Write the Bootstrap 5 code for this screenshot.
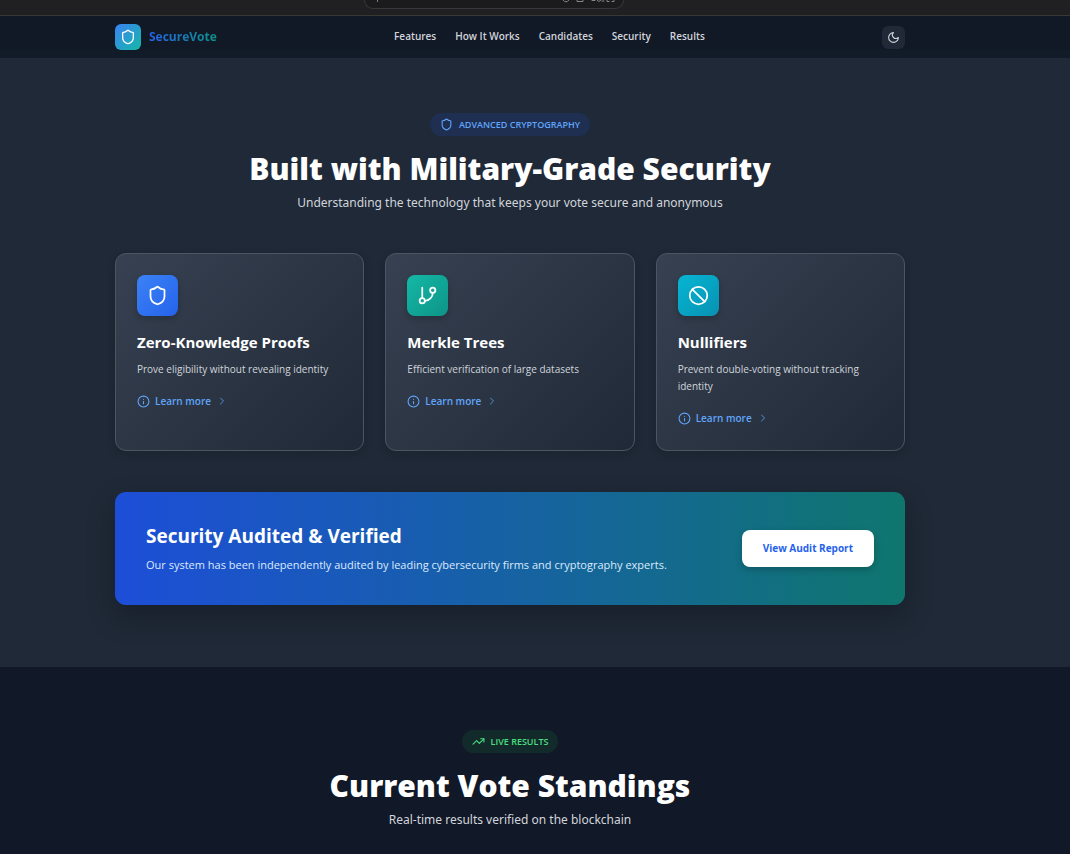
<!DOCTYPE html>
<html lang="en">
<head>
<meta charset="utf-8">
<meta name="viewport" content="width=device-width, initial-scale=1">
<title>SecureVote</title>
<link href="https://cdn.jsdelivr.net/npm/bootstrap@5.3.0/dist/css/bootstrap.min.css" rel="stylesheet">
<style>
body{background:#111827;color:#fff;font-family:"Segoe UI","Open Sans","Noto Sans",sans-serif;overflow-x:hidden}
svg{fill:none;stroke:currentColor;stroke-width:2;stroke-linecap:round;stroke-linejoin:round;flex:none}
.page-inner{padding-left:115px;padding-right:165px}
.browser-strip{height:16px;background:#202022;border-bottom:1px solid #3a3735;overflow:hidden}
.address-bar{width:260px;height:9px;margin-left:364px;padding-left:11px;padding-right:8px;background:#1b1b1d;border:1px solid #38383a;border-top:0;border-radius:0 0 12px 12px;color:#858587}
.address-bar svg{stroke-width:1}
.site-nav{padding:8px 0;background:linear-gradient(#111826 34px,#121c28 34px)}
.brand-tile{width:26px;height:26px;border-radius:6px;color:#fff;background:linear-gradient(135deg,#3b82f6,#14b8a6)}
.brand-name{font-size:12px;line-height:20px;font-weight:700;background:linear-gradient(90deg,#2563eb,#0d9488);-webkit-background-clip:text;background-clip:text;color:transparent}
.menu-links{gap:19px;padding-bottom:2px}
.menu-links .nav-link{padding:0;font-size:10px;line-height:16px;font-weight:600;color:#d1d5db}
.theme-btn{width:23px;height:23px;border-radius:6px;background:#1f2937;color:#d1d5db}
.theme-btn:hover{background:#374151;color:#fff}
.band-security{background:#1f2937;padding-top:55px;padding-bottom:62px}
.band-results{background:#111827;padding-top:63px;padding-bottom:24px}
.pill{height:23px;padding:0 10px;gap:6px;font-size:9px;font-weight:600;border-radius:12px}
.pill-blue{background:#1e2f52;color:#60a5fa}
.pill-green{background:#132a2b;color:#4ade80}
.band-title{font-size:30px;line-height:36px;font-weight:800;margin:14px 0 6px}
.band-sub{font-family:"Segoe UI","Noto Sans",sans-serif;font-size:12px;line-height:20px;color:#d1d5db;margin:0}
.tech-grid{gap:21px;margin-top:40px}
.tech-grid>article{flex:1 1 0}
.tech-card{min-height:198px;padding:21px;border:1px solid #4b5563;border-radius:11px;background:linear-gradient(135deg,#374151,#1f2937);box-shadow:0 3px 8px rgba(0,0,0,.15)}
.tech-tile{width:41px;height:41px;border-radius:8px;box-shadow:0 3px 6px rgba(0,0,0,.2)}
.tile-blue{background:linear-gradient(135deg,#3b82f6,#2563eb)}
.tile-teal{background:linear-gradient(135deg,#14b8a6,#0d9488)}
.tile-cyan{background:linear-gradient(135deg,#06b6d4,#0891b2)}
.tech-card h3{font-size:15px;line-height:20px;font-weight:700;margin:16px 0 9px}
.tech-card p{font-size:10px;line-height:17px;color:#d1d5db;margin:0 0 15px}
.more-link{gap:5px;font-size:10px;line-height:16px;font-weight:600;color:#60a5fa;text-decoration:none}
.more-link .chev{opacity:.8}
.audit{margin-top:41px;padding:31px;border-radius:11px;background:linear-gradient(90deg,#1d4ed8,#0f766e);box-shadow:0 12px 28px rgba(0,0,0,.25)}
.audit h3{font-size:19px;line-height:26px;font-weight:700;margin:0 0 6px}
.audit p{font-size:11px;line-height:19px;color:#dbeafe;margin:0}
.audit-btn{height:37px;padding:0 21px;border-radius:8px;background:#fff;color:#2563eb;font-size:10px;font-weight:700;box-shadow:0 3px 7px rgba(0,0,0,.2);white-space:nowrap}
.audit-btn:hover{background:#eff6ff;color:#1d4ed8}
</style>
</head>
<body>
<div class="browser-strip"><div class="address-bar d-flex justify-content-between align-items-start">
 <svg width="3" height="3" viewBox="0 0 3 3"><path d="M1.500 0v1.500"/></svg>
 <svg width="54" height="3" viewBox="0 0 54 3"><path d="M2 0q3 4 6 0M16 0v1.500h6V0M31 .5h3M36 0q2 3 4 0M41 1h2M46 0v1.500h2M51 1.500h2V0"/></svg>
</div></div>
<header class="navbar site-nav d-block">
 <div class="page-inner d-flex align-items-center justify-content-between">
  <a href="#" class="d-flex align-items-center gap-2 text-decoration-none">
   <span class="brand-tile d-flex align-items-center justify-content-center"><svg width="16" height="16" viewBox="0 0 24 24"><path d="M20 13c0 5-3.500 7.500-7.660 8.950a1 1 0 0 1-.67-.01C7.500 20.500 4 18 4 13V6a1 1 0 0 1 1-1c2 0 4.500-1.200 6.240-2.720a1.170 1.170 0 0 1 1.520 0C14.510 3.810 17 5 19 5a1 1 0 0 1 1 1z"/></svg></span>
   <span class="brand-name">SecureVote</span>
  </a>
  <nav class="nav menu-links flex-nowrap" aria-label="Main">
   <a class="nav-link" href="#">Features</a><a class="nav-link" href="#">How It Works</a><a class="nav-link" href="#">Candidates</a><a class="nav-link" href="#">Security</a><a class="nav-link" href="#">Results</a>
  </nav>
  <button type="button" class="btn theme-btn border-0 p-0 d-flex align-items-center justify-content-center" aria-label="Toggle dark mode"><svg width="13" height="13" viewBox="0 0 24 24"><path d="M12 3a6 6 0 0 0 9 9 9 9 0 1 1-9-9Z"/></svg></button>
 </div>
</header>
<main>
<section class="band-security"><div class="page-inner">
 <div class="text-center">
  <span class="pill pill-blue d-inline-flex align-items-center align-top"><svg width="13" height="13" viewBox="0 0 24 24"><path d="M20 13c0 5-3.500 7.500-7.660 8.950a1 1 0 0 1-.67-.01C7.500 20.500 4 18 4 13V6a1 1 0 0 1 1-1c2 0 4.500-1.200 6.240-2.720a1.170 1.170 0 0 1 1.520 0C14.510 3.810 17 5 19 5a1 1 0 0 1 1 1z"/></svg>ADVANCED CRYPTOGRAPHY</span>
  <h2 class="band-title">Built with Military-Grade Security</h2>
  <p class="band-sub">Understanding the technology that keeps your vote secure and anonymous</p>
 </div>
 <div class="tech-grid d-flex">
  <article class="tech-card">
   <div class="tech-tile tile-blue d-flex align-items-center justify-content-center"><svg width="21" height="21" viewBox="0 0 24 24"><path d="M20 13c0 5-3.500 7.500-7.660 8.950a1 1 0 0 1-.67-.01C7.500 20.500 4 18 4 13V6a1 1 0 0 1 1-1c2 0 4.500-1.200 6.240-2.720a1.170 1.170 0 0 1 1.520 0C14.510 3.810 17 5 19 5a1 1 0 0 1 1 1z"/></svg></div>
   <h3>Zero-Knowledge Proofs</h3><p>Prove eligibility without revealing identity</p>
   <a href="#" class="more-link d-flex align-items-center"><svg width="13" height="13" viewBox="0 0 24 24"><circle cx="12" cy="12" r="10"/><path d="M12 16v-4M12 8h.01"/></svg>Learn more<svg class="chev" width="12" height="12" viewBox="0 0 24 24"><path d="m9 18 6-6-6-6"/></svg></a>
  </article>
  <article class="tech-card">
   <div class="tech-tile tile-teal d-flex align-items-center justify-content-center"><svg width="21" height="21" viewBox="0 0 24 24"><path d="M6 3v12"/><circle cx="18" cy="6" r="3"/><circle cx="6" cy="18" r="3"/><path d="M18 9a9 9 0 0 1-9 9"/></svg></div>
   <h3>Merkle Trees</h3><p>Efficient verification of large datasets</p>
   <a href="#" class="more-link d-flex align-items-center"><svg width="13" height="13" viewBox="0 0 24 24"><circle cx="12" cy="12" r="10"/><path d="M12 16v-4M12 8h.01"/></svg>Learn more<svg class="chev" width="12" height="12" viewBox="0 0 24 24"><path d="m9 18 6-6-6-6"/></svg></a>
  </article>
  <article class="tech-card">
   <div class="tech-tile tile-cyan d-flex align-items-center justify-content-center"><svg width="21" height="21" viewBox="0 0 24 24"><circle cx="12" cy="12" r="10"/><path d="m4.900 4.900 14.200 14.200"/></svg></div>
   <h3>Nullifiers</h3><p>Prevent double-voting without tracking identity</p>
   <a href="#" class="more-link d-flex align-items-center"><svg width="13" height="13" viewBox="0 0 24 24"><circle cx="12" cy="12" r="10"/><path d="M12 16v-4M12 8h.01"/></svg>Learn more<svg class="chev" width="12" height="12" viewBox="0 0 24 24"><path d="m9 18 6-6-6-6"/></svg></a>
  </article>
 </div>
 <div class="audit d-flex align-items-center justify-content-between">
  <div><h3>Security Audited &amp; Verified</h3><p>Our system has been independently audited by leading cybersecurity firms and cryptography experts.</p></div>
  <button type="button" class="btn audit-btn border-0">View Audit Report</button>
 </div>
</div></section>
<section class="band-results"><div class="page-inner text-center">
  <span class="pill pill-green d-inline-flex align-items-center align-top"><svg width="13" height="13" viewBox="0 0 24 24"><path d="m22 7-8.500 8.500-5-5L2 17"/><path d="M16 7h6v6"/></svg>LIVE RESULTS</span>
  <h2 class="band-title">Current Vote Standings</h2>
  <p class="band-sub">Real-time results verified on the blockchain</p>
</div></section>
</main>
<script src="https://cdn.jsdelivr.net/npm/bootstrap@5.3.0/dist/js/bootstrap.bundle.min.js"></script>
</body>
</html>
